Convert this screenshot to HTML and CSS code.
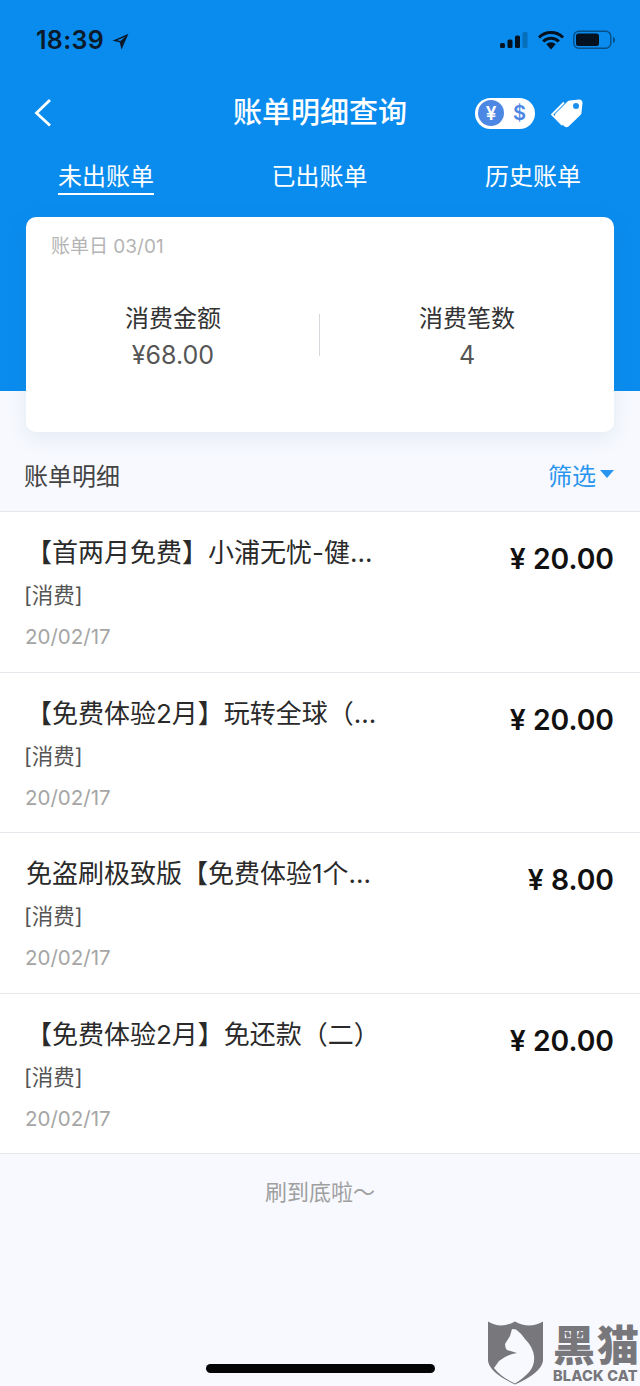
FILE: index.html
```html
<!DOCTYPE html>
<html lang="zh">
<head>
<meta charset="utf-8">
<title>账单明细查询</title>
<link rel="stylesheet" href="styles.css">
</head>
<body>
<div class="page">
  <header class="hero">
    <div class="status">
      <div class="status-left">
        <span class="clock">18:39</span>
        <svg class="loc" width="17" height="17" viewBox="0 0 16 16"><path d="M15.5 .8 .5 7.2 7.2 8.800 9 15.500Z M12.600 3.600 7.900 7.600 4.800 6.900Z" fill="#0a1a2a" fill-rule="evenodd"/></svg>
      </div>
      <div class="status-right">
        <svg width="30" height="18" viewBox="0 0 30 18"><g fill="#04121f"><rect x="1" y="12" width="5" height="5" rx="1.500"/><rect x="8.500" y="8.500" width="5" height="8.500" rx="1.500"/><rect x="16" y="4.500" width="5" height="12.500" rx="1.500"/></g><rect x="23.500" y="1" width="5" height="16" rx="1.500" fill="#04121f" opacity=".25"/></svg>
        <svg width="28" height="20" viewBox="0 0 28 20"><path d="M2 7.500a17 17 0 0 1 24 0M6.200 11.500a11 11 0 0 1 15.600 0M10.300 15.300a5 5 0 0 1 7.400 0" fill="none" stroke="#04121f" stroke-width="3"/><path d="M14 19.500 10.800 16a5 5 0 0 1 6.400 0Z" fill="#04121f"/></svg>
        <svg width="44" height="20" viewBox="0 0 44 20"><rect x=".8" y="1.300" width="37" height="17" rx="5" fill="none" stroke="#04121f" stroke-opacity=".5" stroke-width="1.400"/><rect x="3" y="3.500" width="23" height="12.500" rx="2.500" fill="#04121f"/><path d="M40 7v6c1.500-.5 2-1.500 2-3s-.5-2.500-2-3Z" fill="#04121f" fill-opacity=".5"/></svg>
      </div>
    </div>
    <nav class="navbar">
      <svg class="back" width="20" height="30" viewBox="0 0 20 30"><path d="M17 2.500 3.500 15.500 17 28" transform="translate(0 -.5)" fill="none" stroke="#fff" stroke-width="2.800"/></svg>
      <h1 class="title">账单明细查询</h1>
      <div class="nav-actions">
        <div class="switch">
          <span class="coin">¥</span>
          <span class="dollar">$</span>
        </div>
        <svg width="34" height="30" viewBox="0 0 34 30"><path d="M12.500 27 2 16.500 14 4.500" fill="none" stroke="#fff" stroke-width="1.800"/><path d="M5.500 15.500 17.500 3.500Q18.500 2.500 20 2.500L29 1.500Q32.500 1.500 32.500 5L31.500 14.500Q31.500 16 30.500 17L18.500 28.500Q16.500 30 14.500 28.500L5.500 19.500Q4 17.500 5.500 15.500Z" fill="#fff"/><circle cx="26" cy="8" r="3" fill="#1a8fee"/></svg>
      </div>
    </nav>
    <div class="tabs">
      <span class="tab tab-active">未出账单</span>
      <span class="tab">已出账单</span>
      <span class="tab">历史账单</span>
    </div>
    <section class="card">
      <div class="card-date">账单日 03/01</div>
      <div class="stats">
        <div class="stat">
          <div class="stat-label">消费金额</div>
          <div class="stat-value">¥68.00</div>
        </div>
        <div class="stat-sep"></div>
        <div class="stat">
          <div class="stat-label">消费笔数</div>
          <div class="stat-value">4</div>
        </div>
      </div>
    </section>
  </header>

  <div class="section-head">
    <span class="section-title">账单明细</span>
    <span class="filter">筛选<i class="caret"></i></span>
  </div>

  <div class="list">
    <article class="row">
      <div class="row-main">
        <div class="row-title">【首两月免费】小浦无忧-健...</div>
        <div class="row-type">[消费]</div>
        <div class="row-date">20/02/17</div>
      </div>
      <div class="row-amount">¥ 20.00</div>
    </article>
    <article class="row">
      <div class="row-main">
        <div class="row-title">【免费体验2月】玩转全球（...</div>
        <div class="row-type">[消费]</div>
        <div class="row-date">20/02/17</div>
      </div>
      <div class="row-amount">¥ 20.00</div>
    </article>
    <article class="row">
      <div class="row-main">
        <div class="row-title">免盗刷极致版【免费体验1个...</div>
        <div class="row-type">[消费]</div>
        <div class="row-date">20/02/17</div>
      </div>
      <div class="row-amount">¥ 8.00</div>
    </article>
    <article class="row">
      <div class="row-main">
        <div class="row-title">【免费体验2月】免还款（二）</div>
        <div class="row-type">[消费]</div>
        <div class="row-date">20/02/17</div>
      </div>
      <div class="row-amount">¥ 20.00</div>
    </article>
  </div>

  <div class="end-note">刷到底啦～</div>

  <div class="home-bar"></div>

  <div class="watermark">
    <svg width="56" height="64" viewBox="0 0 56 64"><path d="M0 .5Q7 4.500 13 4.500 20 4.500 27 .5 34 4.500 41 4.500 48 4.500 55 .5V40Q53 52 27 63.500 2 52 0 40Z" fill="#77777c"/><path d="M24 8 28 8.500Q33 12 37 18 45 26 46 35 47 43 42 50 36 57 27 62.500 14 57 6 47L11 40Q18 34 29 32L19 29Q17 27 17 23L22 15Z" fill="#f7f9fe"/></svg>
    <div class="wm-text">
      <span class="wm-cn">黑猫</span>
      <span class="wm-en">BLACK CAT</span>
    </div>
  </div>
</div>
</body>
</html>
```
FILE: styles.css
```css
* { box-sizing: border-box; margin: 0; padding: 0; }
html, body { width: 640px; height: 1386px; overflow: hidden; }
body { font-family: "Inter", "Noto Sans CJK SC", sans-serif; background: #f7f9fe; color: #1a1a1a; }
.page { position: relative; width: 640px; height: 1386px; background: #f7f9fe; }

.hero { height: 391px; background: #098cee; display: flex; flex-direction: column; }
.status { height: 78px; padding: 25px 23px 0 36px; display: flex; justify-content: space-between; align-items: flex-start; }
.status-left { display: flex; align-items: center; gap: 8px; height: 30px; }
.clock { font-size: 25px; font-weight: 600; color: #0a1a2a; letter-spacing: .3px; }
.loc { margin-top: 2px; }
.status-right { display: flex; align-items: center; gap: 8px; height: 30px; }

.navbar { position: relative; height: 70px; padding: 0 56px 0 33px; display: flex; align-items: center; justify-content: space-between; }
.title { position: absolute; left: 0; right: 0; text-align: center; font-size: 29px; font-weight: 500; color: #fff; line-height: 72px; }
.back { position: relative; }
.nav-actions { position: relative; display: flex; align-items: center; gap: 15px; }
.switch { width: 60px; height: 31px; background: #fff; border-radius: 16px; display: flex; align-items: center; padding: 2px 0 2px 3px; }
.coin { width: 26px; height: 26px; border-radius: 50%; background: #4d87e4; color: #fff; font-size: 19px; font-weight: 600; display: flex; align-items: center; justify-content: center; }
.dollar { margin-left: 9px; color: #4d87e4; font-size: 20px; font-weight: 600; }

.tabs { height: 69px; padding: 0 59px 0 58px; display: flex; justify-content: space-between; align-items: flex-start; }
.tab { font-size: 24px; color: #fff; line-height: 34px; margin-top: 12px; }
.tab-active { border-bottom: 2px solid #fff; height: 35px; }

.card { margin: 0 26px -41px; height: 215px; flex: none; background: #fff; border-radius: 10px; box-shadow: 0 6px 20px rgba(90, 120, 170, .12); padding: 16px 25px 0; }
.card-date { font-size: 19px; line-height: 28px; color: #b4b4b4; }
.stats { display: flex; align-items: center; margin: 41px -25px 0; }
.stat { flex: 1; text-align: center; }
.stat-label { font-size: 24px; line-height: 34px; color: #333; }
.stat-value { font-size: 25px; line-height: 36px; margin-top: 1px; color: #555; }
.stat-sep { width: 1px; height: 42px; background: #d5d8dc; margin: 0 0 6px -1px; }

.section-head { margin-top: 41px; height: 80px; padding: 5px 26px 0 24px; display: flex; justify-content: space-between; align-items: center; border-bottom: 1px solid #e6e7ec; }
.section-title { font-size: 24px; color: #444; }
.filter { font-size: 24px; color: #2a95ee; display: flex; align-items: center; gap: 4px; }
.caret { width: 0; height: 0; border-left: 7px solid transparent; border-right: 7px solid transparent; border-top: 8px solid #2a95ee; }

.list { background: #fff; }
.row { height: 160.500px; padding: 23px 26px 0 24px; display: flex; justify-content: space-between; border-bottom: 1px solid #e6e7ec; }
.row-title { font-size: 26px; line-height: 36px; color: #2a2a2a; white-space: nowrap; margin-left: 2px; }
.row-type { font-size: 21.500px; line-height: 28px; margin-top: 10px; color: #555; }
.row-date { font-size: 20.500px; line-height: 28px; margin-top: 14px; margin-left: 1px; color: #a5a5a5; }
.row-amount { font-size: 28.300px; font-weight: 600; line-height: 36px; margin-top: 6px; color: #111; }

.end-note { text-align: center; font-size: 22px; line-height: 30px; margin-top: 23px; color: #a0a0a0; }

.home-bar { position: absolute; left: 206px; bottom: 13px; width: 229px; height: 9px; border-radius: 5px; background: #050505; }

.watermark { position: absolute; left: 488px; top: 1321px; display: flex; gap: 9px; align-items: flex-start; }
.wm-text { display: flex; flex-direction: column; }
.wm-cn { font-size: 42px; line-height: 43px; margin-top: 3px; font-weight: 900; color: #77777c; letter-spacing: 2px; white-space: nowrap; }
.wm-en { font-size: 14.500px; line-height: 17px; font-weight: 800; color: #77777c; white-space: nowrap; letter-spacing: .2px; }
```
